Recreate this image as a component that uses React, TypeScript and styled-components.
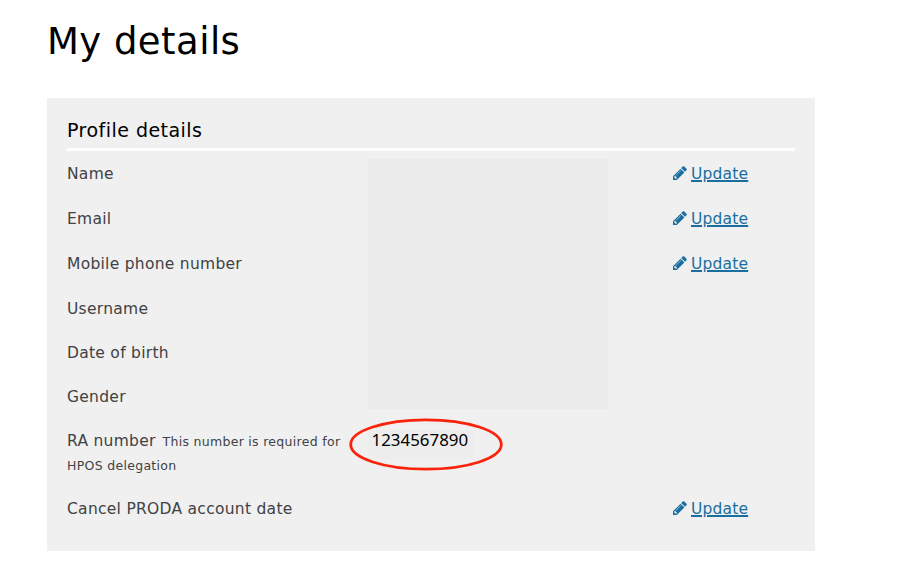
import React from "react";
import styled, { createGlobalStyle } from "styled-components";

const GlobalStyle = createGlobalStyle`
  body {
    margin: 0;
    background: #fff;
    font-family: "DejaVu Sans", Verdana, sans-serif;
    overflow: hidden;
  }
`;

const Page = styled.main`
  box-sizing: border-box;
  width: 901px;
  height: 571px;
  padding: 17px 86px 20px 47px;
`;

const Title = styled.h1`
  margin: 0 0 31px;
  font-size: 37px;
  line-height: 50px;
  font-weight: 400;
  letter-spacing: 0.45px;
  color: #000;
`;

const Panel = styled.section`
  box-sizing: border-box;
  width: 768px;
  height: 453px;
  padding: 18px 20px 0;
  background: #f0f0f0;
`;

const PanelTitle = styled.h2`
  margin: 0 0 9px;
  height: 32px;
  border-bottom: 3px solid #fff;
  font-size: 19px;
  line-height: 28px;
  font-weight: 400;
  letter-spacing: 0.47px;
  color: #000;
`;

const Details = styled.div`
  display: grid;
  grid-template-columns: 301px 305px 1fr;
  grid-template-rows: 45px 45px 45px 44px 44px 44px 68px 44px;
`;

const Label = styled.div<{ $row: number }>`
  grid-column: 1;
  grid-row: ${(p) => p.$row};
  padding-top: 2px;
  font-size: 15.5px;
  line-height: 24px;
  letter-spacing: 0.28px;
  white-space: nowrap;
  color: #404244;
`;

const Hint = styled.small`
  font-size: 12.5px;
  line-height: 18px;
  letter-spacing: 0.3px;
`;

const InlineHint = styled(Hint)`
  margin-left: 2.5px;
`;

const RedactedValues = styled.div`
  grid-column: 2;
  grid-row: 1 / 7;
  width: 240px;
  height: 250px;
  margin-top: -1px;
  background: #ebebeb;
`;

const RaValue = styled.div`
  grid-column: 2;
  grid-row: 7;
  position: relative;
  box-sizing: border-box;
  width: 105px;
  height: 29px;
  margin-top: 3px;
  padding-left: 3.5px;
  background: #ededed;
  font-family: "Noto Sans", "Open Sans", sans-serif;
  font-size: 16.9px;
  line-height: 20px;
  color: #000;
`;

const Ring = styled.svg`
  position: absolute;
  left: -20px;
  top: -13px;
  width: 156px;
  height: 56px;
  overflow: visible;
`;

const Action = styled.a<{ $row: number }>`
  grid-column: 3;
  grid-row: ${(p) => p.$row};
  display: flex;
  align-items: flex-start;
  height: 24px;
  padding-top: 2px;
  font-size: 15.5px;
  line-height: 24px;
  letter-spacing: 0.18px;
  color: #196f9f;
`;

const ActionText = styled.span`
  text-decoration: underline;
  text-decoration-thickness: 1px;
  text-underline-offset: 2px;
`;

const PencilIcon = styled.svg`
  width: 14px;
  height: 14px;
  margin: 4px 4px 0 0;
  fill: currentColor;
`;

function Update({ row }: { row: number }) {
  return (
    <Action $row={row} href="#">
      <PencilIcon viewBox="0 0 1536 1536" aria-hidden="true">
        <path d="M363 1408l91-91-235-235-91 91v107h128v128h107zm523-928q0-22-22-22-10 0-17 7l-542 542q-7 7-7 17 0 22 22 22 10 0 17-7l542-542q7-7 7-17zm-54-192l416 416-832 832h-416v-416zm683 96q0 53-37 90l-166 166-416-416 166-165q36-38 90-38 53 0 91 38l235 234q37 39 37 91z" />
      </PencilIcon>
      <ActionText>Update</ActionText>
    </Action>
  );
}

const rows = [
  { label: "Name", update: true },
  { label: "Email", update: true },
  { label: "Mobile phone number", update: true },
  { label: "Username" },
  { label: "Date of birth" },
  { label: "Gender" },
  { label: "RA number", hint: ["This number is required for", "HPOS delegation"] },
  { label: "Cancel PRODA account date", update: true },
];

export default function App() {
  return (
    <>
      <GlobalStyle />
      <Page>
        <Title>My details</Title>
        <Panel>
          <PanelTitle>Profile details</PanelTitle>
          <Details>
            {rows.map((r, i) => (
              <React.Fragment key={r.label}>
                <Label $row={i + 1}>
                  {r.label}
                  {r.hint && (
                    <>
                      <InlineHint> {r.hint[0]}</InlineHint>
                      <br />
                      <Hint>{r.hint[1]}</Hint>
                    </>
                  )}
                </Label>
                {r.update && <Update row={i + 1} />}
              </React.Fragment>
            ))}
            <RedactedValues />
            <RaValue>
              1234567890
              <Ring viewBox="0 0 156 56" aria-hidden="true">
                <ellipse cx="78" cy="27.5" rx="75.3" ry="24.7" fill="none" stroke="#fa230c" strokeWidth="2.8" />
              </Ring>
            </RaValue>
          </Details>
        </Panel>
      </Page>
    </>
  );
}
